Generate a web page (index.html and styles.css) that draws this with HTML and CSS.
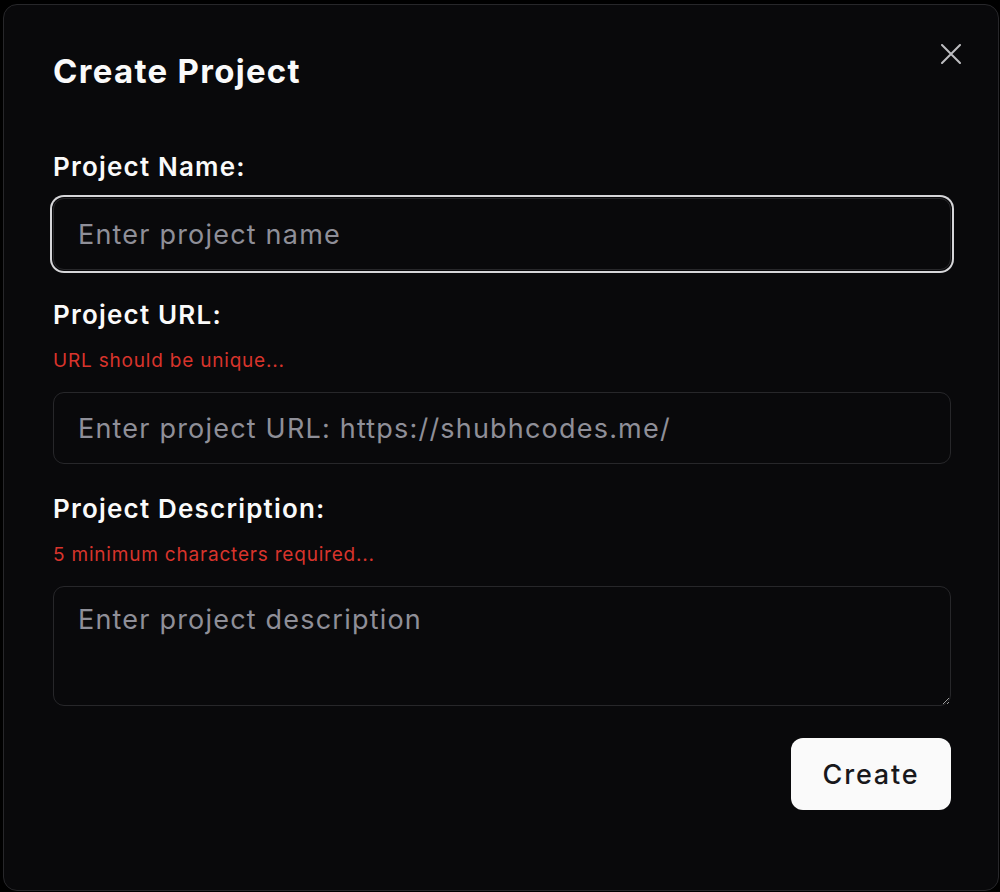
FILE: index.html
```html
<!DOCTYPE html>
<html lang="en">
<head>
<meta charset="utf-8">
<title>Create Project</title>
<link rel="stylesheet" href="styles.css">
</head>
<body>
<div class="dialog">
  <button class="close" aria-label="Close">
    <svg width="20" height="20" viewBox="0 0 20 20" fill="none" stroke="currentColor" stroke-width="2" stroke-linecap="round"><path d="M1 1L19 19M19 1L1 19"/></svg>
  </button>
  <h2 class="title">Create Project</h2>
  <form class="form">
    <div class="field first">
      <label class="label">Project Name:</label>
      <input class="input focused" type="text" placeholder="Enter project name">
    </div>
    <div class="field">
      <label class="label">Project URL:</label>
      <p class="error">URL should be unique...</p>
      <input class="input" type="text" placeholder="Enter project URL: https://shubhcodes.me/">
    </div>
    <div class="field">
      <label class="label">Project Description:</label>
      <p class="error">5 minimum characters required...</p>
      <textarea class="input textarea" placeholder="Enter project description"></textarea>
    </div>
    <div class="actions">
      <button type="button" class="btn">Create</button>
    </div>
  </form>
</div>
</body>
</html>
```
FILE: styles.css
```css
* { box-sizing: border-box; }
html, body { height: 100%; }
body {
  margin: 0;
  background: #000;
  padding: 4px 1px 1px 3px;
  font-family: Inter, "Open Sans", sans-serif;
  color-scheme: dark;
}
.dialog {
  position: relative;
  width: 996px;
  height: 887px;
  background: #09090b;
  border: 1px solid #27272a;
  border-radius: 14px;
  padding: 46px 47px 0 49px;
}
.close {
  position: absolute;
  top: 39px;
  right: 37px;
  width: 20px;
  height: 20px;
  padding: 0;
  border: 0;
  background: transparent;
  color: #bdbdc1;
  display: flex;
}
.title {
  margin: 0;
  font-size: 33px;
  line-height: 40px;
  font-weight: 700;
  color: #fafafa;
  letter-spacing: 1.3px;
}
.form {
  display: flex;
  flex-direction: column;
}
.field {
  display: flex;
  flex-direction: column;
  margin-top: 29px;
}
.field.first { margin-top: 60px; }
.label {
  font-size: 26px;
  line-height: 32px;
  font-weight: 600;
  color: #fafafa;
  letter-spacing: 1.2px;
  margin-bottom: 15px;
}
.error {
  margin: 3px 0 19px;
  font-size: 19px;
  line-height: 24px;
  letter-spacing: 0.8px;
  color: #d8342c;
}
.input {
  width: 100%;
  height: 72px;
  background: #09090b;
  border: 1px solid #27272a;
  border-radius: 11px;
  padding: 0 24px;
  font-family: inherit;
  font-size: 27px;
  letter-spacing: 1.2px;
  color: #fafafa;
  outline: none;
}
.input::placeholder { color: #8f8f98; }
.input.focused {
  box-shadow: 0 0 0 1px #09090b, 0 0 0 3px #d6d6d9;
}
.textarea {
  height: 120px;
  padding-top: 15px;
  line-height: 36px;
  resize: vertical;
  display: block;
}
.actions {
  display: flex;
  justify-content: flex-end;
  margin-top: 32px;
}
.btn {
  width: 160px;
  height: 72px;
  border: 0;
  border-radius: 12px;
  background: #fafafa;
  color: #18181b;
  font-family: inherit;
  font-size: 27px;
  letter-spacing: 1.8px;
  font-weight: 500;
}
```
